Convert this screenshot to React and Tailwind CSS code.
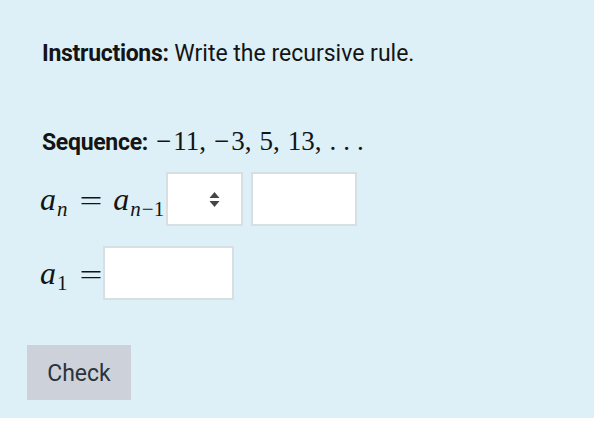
import React from 'react';

const Sub = ({ children }) => (
  <span className="text-[21px] relative top-[6px] ml-[1px]">{children}</span>
);

const A = () => <i className="text-[32px]">a</i>;

const Eq = ({ className }) => (
  <span className={`inline-block scale-x-[1.45] ${className}`}>=</span>
);

const SortIcon = () => (
  <svg width="11" height="17" viewBox="0 0 11 17" className="fill-[#454545]">
    <path d="M5.5 1 L10.5 7 H0.5 Z" />
    <path d="M5.5 16 L10.5 10 H0.5 Z" />
  </svg>
);

const Comma = () => <span className="mr-[8px]">,</span>;
const Minus = () => <span className="mr-[2px]">−</span>;

const App = () => {
  return (
    <div className="w-[594px] h-[425px] bg-white">
      <div className="h-[418px] bg-[#ddf0f7] pt-[38px] font-['Roboto',sans-serif] text-[#141414]">
        <p className="ml-[42px] text-[23px] leading-[32px]">
          <span className="font-bold tracking-[-0.3px]">Instructions:</span> Write the recursive rule.
        </p>

        <div className="mt-[55px] ml-[42px] flex items-baseline h-[32px]">
          <span className="font-bold text-[23px] tracking-[-0.3px]">Sequence:</span>
          <span className="ml-[8px] text-[27px] font-['Liberation_Serif',serif] leading-[32px]">
            <Minus />11<Comma />
            <Minus />3<Comma />
            5<Comma />
            13<Comma />
            <span className="tracking-[7px]">...</span>
          </span>
        </div>

        <div className="mt-[15px] ml-[40px] flex items-center h-[54px]">
          <span className="text-[28px] font-['Liberation_Serif',serif] flex items-baseline">
            <A /><Sub><i>n</i></Sub>
            <Eq className="mx-[15px]" />
            <A /><Sub><i>n</i><span className="ml-[1px]">−</span>1</Sub>
          </span>
          <div className="ml-[2px] w-[77px] h-[54px] bg-white border-2 border-[#d8dfe2] flex items-center justify-end pr-[21px]">
            <SortIcon />
          </div>
          <div className="ml-[8px] w-[106px] h-[54px] bg-white border-2 border-[#d8dfe2]" />
        </div>

        <div className="mt-[20px] ml-[40px] flex items-center h-[54px]">
          <span className="text-[28px] font-['Liberation_Serif',serif] flex items-baseline">
            <A /><Sub>1</Sub>
            <Eq className="ml-[15px] mr-[4px]" />
          </span>
          <div className="ml-[1px] w-[131px] h-[54px] bg-white border-2 border-[#d8dfe2]" />
        </div>

        <button className="mt-[45px] ml-[27px] w-[104px] h-[55px] bg-[#cdd2da] text-[23px] leading-none text-[#2b333d] flex items-center justify-center pt-[2px]">
          Check
        </button>
      </div>
    </div>
  );
};

export default App;
